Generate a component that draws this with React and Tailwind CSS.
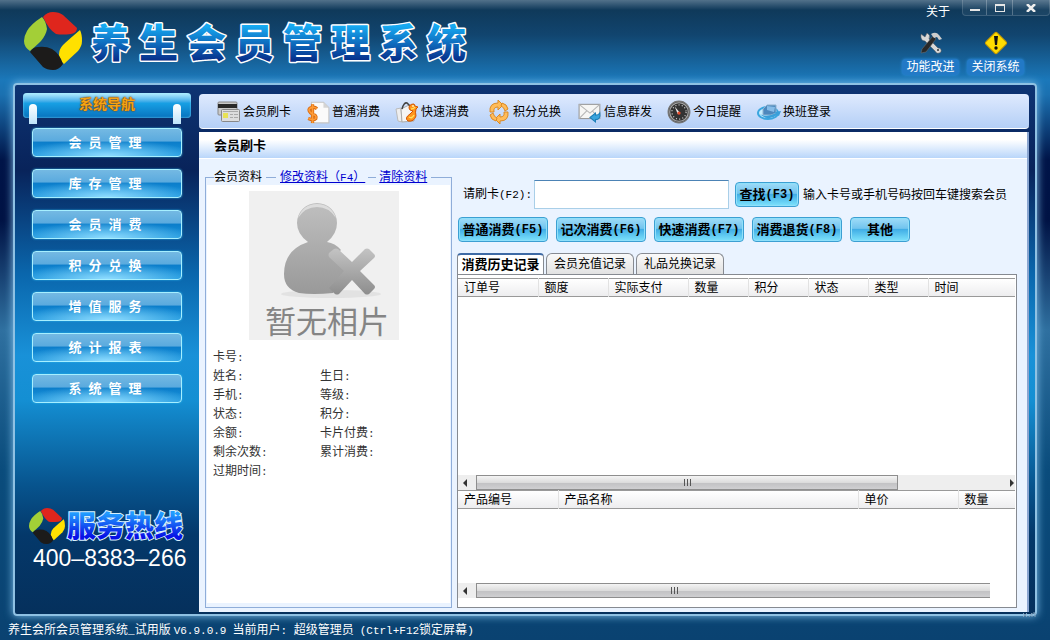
const navItems = ["会员管理", "库存管理", "会员消费", "积分兑换", "增值服务", "统计报表", "系统管理"];
const actions = [
    { name: "普通消费", hotkey: "(F5)" },
    { name: "记次消费", hotkey: "(F6)" },
    { name: "快速消费", hotkey: "(F7)" },
    { name: "消费退货", hotkey: "(F8)" },
];
const orderColumns = [
    { name: "订单号", width: "w-20" },
    { name: "额度", width: "w-[70px]" },
    { name: "实际支付", width: "w-20" },
    { name: "数量", width: "w-[60px]" },
    { name: "积分", width: "w-[60px]" },
    { name: "状态", width: "w-[60px]" },
    { name: "类型", width: "w-[60px]" },
    { name: "时间", width: "" },
];
const productColumns = [
    { name: "产品编号", width: "w-[100px]" },
    { name: "产品名称", width: "w-[300px]" },
    { name: "单价", width: "w-[100px]" },
    { name: "数量", width: "" },
];
const fields = [
    ["卡号", ""],
    ["姓名", "生日"],
    ["手机", "等级"],
    ["状态", "积分"],
    ["余额", "卡片付费"],
    ["剩余次数", "累计消费"],
    ["过期时间", ""],
];

function Mono({ children }) {
    return <span className="font-['Liberation_Mono',monospace] text-[11px]">{children}</span>;
}

function Logo({ className }) {
    return (
        <svg viewBox="0 0 58 58" className={className} aria-hidden="true">
            <path d="M19 5Q23 0 29 0Q35 0 39 3L53 16Q53 21 47 22Q38 23 32 22Q25 18 19 5Z" fill="#df261d" />
            <path d="M18 5Q22 9 23 17Q22 23 17 29Q13 33 6 39Q0 35 0 29Q0 24 3 19Q7 12 18 5Z" fill="#a3cf37" />
            <path d="M56 18Q58 22 58 29Q58 34 54 39L40 52Q36 49 35 43Q35 37 39 33Q43 29 56 18Z" fill="#ffe100" />
            <path d="M6 40Q9 35 14 35Q22 34 28 37Q36 42 39 52Q35 58 29 58Q23 58 19 55Z" fill="#1c1b1a" />
        </svg>
    );
}

function CardIcon() {
    return (
        <svg viewBox="0 0 24 22" className="h-6 w-6">
            <rect x="1" y="1" width="19" height="13" rx="1" fill="#c9c9c9" stroke="#888" />
            <rect x="1" y="3" width="19" height="4" fill="#292929" />
            <rect x="4.500" y="8.500" width="18" height="12" rx="1" fill="#ddd" stroke="#888" />
            <rect x="6" y="12" width="5" height="5" fill="#e8e255" />
            <path d="M6 10.500h15M13 13.500h3M17 13.500h4M13 16.500h3M17 16.500h4" stroke="#aaa" />
        </svg>
    );
}

function BillIcon() {
    return (
        <svg viewBox="0 0 22 22" className="h-6 w-6">
            <path d="M5 2h11l5 5v14H5z" fill="#fafafa" stroke="#c4c4c4" />
            <path d="M16 2v5h5z" fill="#d4d4d4" />
            <path d="M10 8Q8 6 5 7Q2 8 3 10Q4 12 6 13Q10 14 9 17Q7 19 2 17M6 4v17" fill="none" stroke="#d86a10" strokeWidth="3" />
            <path d="M10 8Q8 6 5 7Q2 8 3 10Q4 12 6 13Q10 14 9 17Q7 19 2 17M6 4v17" fill="none" stroke="#ff9c36" strokeWidth="1.500" />
        </svg>
    );
}

function BagIcon() {
    return (
        <svg viewBox="0 0 24 22" className="h-6 w-6">
            <path d="M1 8l5-1 1 14-4-1z" fill="#eee" stroke="#bbb" />
            <path d="M6 8l8-4 5 5v11l-12 1z" fill="#f5f5f5" stroke="#aaa" />
            <path d="M7 8Q9 1 12 2L17 7" fill="none" stroke="#444" strokeWidth="1.500" />
            <path d="M14 7Q14 3 19 3l1 2 3 1-2 2Q20 11 21 15q-2 6-8 5-4-3 2-7l3-3-3-1Z" fill="#ff941d" stroke="#d25500" />
            <circle cx="18" cy="5" r="1" fill="#fff1b2" />
            <path d="M14 16q3 2 5-2M16 8q3 0 4-2" fill="none" stroke="#ffe05c" strokeWidth="1.500" />
        </svg>
    );
}

function ExchangeIcon() {
    return (
        <svg viewBox="0 0 22 24" className="h-6 w-6">
            <path d="M2 12Q1 3 10 3V0l5 5-5 5V7Q5 7 6 12Z" fill="#ffbc59" stroke="#dc8a24" />
            <path d="M20 12Q21 21 12 21v3l-5-5 5-5v3Q17 17 16 12Z" fill="#ffbc59" stroke="#dc8a24" />
            <path d="M14 3Q19 4 20 9L17 11Q16 7 13 6ZM8 21Q3 20 2 15L5 13Q6 17 9 18Z" fill="#ffbc59" stroke="#dc8a24" />
        </svg>
    );
}

function MailIcon() {
    return (
        <svg viewBox="0 0 22 20" className="h-6 w-6">
            <rect x="1" y="3" width="19" height="13" fill="#f6f6f4" stroke="#9a9a9a" />
            <path d="M1 3l10 8 9-8M1 16l7-7M20 16l-7-7" fill="none" stroke="#b5b5b5" />
            <path d="M11 15l5-4v2q3 0 4-2 1 6-4 6v2z" fill="#39a4dd" stroke="#1c7fb8" />
        </svg>
    );
}

function GaugeIcon() {
    return (
        <svg viewBox="0 0 22 22" className="h-6 w-6">
            <circle cx="11" cy="11" r="10" fill="#555" stroke="#777" />
            <circle cx="11" cy="11" r="8.500" fill="#333" stroke="#aaa" />
            <circle cx="11" cy="11" r="6.500" fill="none" stroke="#ddd" strokeDasharray="1 2" />
            <path d="M7 6l5 6-2 1z" fill="#eee" />
            <circle cx="11" cy="12" r="1.500" fill="#ed4d2c" />
        </svg>
    );
}

function ShiftIcon() {
    return (
        <svg viewBox="0 0 24 22" className="h-6 w-6">
            <ellipse cx="11" cy="12" rx="10" ry="6" fill="#c5edff" stroke="#3ba6df" strokeWidth="2" />
            <path d="M6 8l4-4h9v8l-5 2H6z" fill="#4d88bd" stroke="#8fb2d0" />
            <path d="M10 5l8 1-1 5-7-2z" fill="#86bce8" />
            <path d="M3 13Q10 17 19 12l-2-1 7-1-2 5-2-1Q11 21 3 13" fill="#399fd9" />
        </svg>
    );
}

const tools = [
    { name: "会员刷卡", icon: CardIcon, width: "w-[89px]" },
    { name: "普通消费", icon: BillIcon, width: "w-[89px]" },
    { name: "快速消费", icon: BagIcon, width: "w-[92px]" },
    { name: "积分兑换", icon: ExchangeIcon, width: "w-[91px]" },
    { name: "信息群发", icon: MailIcon, width: "w-[89px]" },
    { name: "今日提醒", icon: GaugeIcon, width: "w-[90px]" },
    { name: "换班登录", icon: ShiftIcon, width: "w-[92px]" },
];

function Header() {
    return (
        <header className="flex h-[83px] justify-between pl-6">
            <div className="flex items-start pt-3">
                <Logo className="h-[58px] w-[58px]" />
                <svg viewBox="0 0 386 58" className="h-[58px] w-[386px] overflow-visible" role="img" aria-label="养生会员管理系统">
                    <defs>
                        <linearGradient id="title" x1="0" y1="0" x2="0" y2="1">
                            <stop offset="0.25" stopColor="#16aaf2" />
                            <stop offset="0.85" stopColor="#07328d" />
                        </linearGradient>
                    </defs>
                    <text
                        x="9 57 105 153 201 249 297 345"
                        y="45"
                        fontSize="39"
                        fontWeight="900"
                        fill="url(#title)"
                        stroke="#fff"
                        strokeWidth="3"
                        strokeLinejoin="round"
                        paintOrder="stroke"
                        className="font-['Noto_Sans_CJK_SC',sans-serif]"
                    >
                        养生会员管理系统
                    </text>
                </svg>
            </div>
            <div className="flex flex-col items-end text-white">
                <div className="flex">
                    <button className="mr-3 mt-1 h-4 leading-4">关于</button>
                    <div className="flex h-4 rounded-b-sm border-x border-b border-white/15 bg-white/5">
                        <button aria-label="最小化" className="flex w-6 items-end justify-center border-r border-white/25 pb-1">
                            <span className="h-[2px] w-[10px] bg-[#e6e6e6]"></span>
                        </button>
                        <button aria-label="最大化" className="flex w-[26px] items-center justify-center border-r border-white/25">
                            <span className="h-2 w-[10px] border border-t-2 border-[#e6e6e6]"></span>
                        </button>
                        <button aria-label="关闭" className="flex w-[36px] items-center justify-center">
                            <svg viewBox="0 0 10 8" className="h-2 w-[10px]">
                                <path d="M1 0L9 8M9 0L1 8" stroke="#eee" strokeWidth="2.500" />
                            </svg>
                        </button>
                    </div>
                </div>
                <div className="mr-[26px] mt-[11px] flex gap-2">
                    <button className="flex w-[57px] flex-col items-center">
                        <svg viewBox="0 0 24 24" className="h-6 w-6">
                            <path d="M2 3l4 3 2-4q4 2 2 6l9 9q4 0 3 4-4 3-6-1L6 10Q1 10 2 3Z" fill="#d8d8d8" stroke="#555" strokeWidth="0.500" />
                            <path d="M14 5l3 3-10 13-5 1 1-4Z" fill="#292929" stroke="#777" strokeWidth="0.500" />
                            <path d="M12 3q5-3 8 1l3 4-3 1-2-3-3 1Z" fill="#ccc" />
                            <circle cx="19" cy="19" r="1" fill="#333" />
                        </svg>
                        <span className="mt-1 h-4 w-full rounded bg-[#2279c6] leading-4 shadow-[0_0_3px_#2a8fe0]">功能改进</span>
                    </button>
                    <button className="flex w-[57px] flex-col items-center">
                        <svg viewBox="0 0 24 24" className="h-6 w-6">
                            <rect x="4" y="4" width="16" height="16" rx="2" transform="rotate(45 12 12)" fill="#ffdc00" stroke="#c99b00" />
                            <path d="M10 5h4l-1 9h-2z" fill="#111" />
                            <circle cx="12" cy="17" r="1.700" fill="#111" />
                        </svg>
                        <span className="mt-1 h-4 w-full rounded bg-[#2279c6] leading-4 shadow-[0_0_3px_#2a8fe0]">关闭系统</span>
                    </button>
                </div>
            </div>
        </header>
    );
}

function Sidebar() {
    return (
        <aside className="flex w-[184px] shrink-0 flex-col items-center pt-2">
            <div className="relative h-[25px] w-[168px] rounded bg-linear-to-b from-[#b8f0ff] via-[#18a0e4] via-40% to-[#0872be] text-center shadow-[inset_0_0_2px_#8ee6ff]">
                <h2 className="text-sm font-bold leading-6 text-[#f5a414] [text-shadow:0_0_1px_#7a3900,0_0_2px_#7a3900]">系统导航</h2>
                <span className="absolute left-[6px] top-[11px] h-5 w-2 rounded-t bg-linear-to-b from-white to-[#bde4fa]"></span>
                <span className="absolute right-[10px] top-[11px] h-5 w-2 rounded-t bg-linear-to-b from-white to-[#bde4fa]"></span>
            </div>
            <nav className="mt-[10px] flex flex-col gap-3">
                {navItems.map((item) => (
                    <button
                        key={item}
                        className="flex h-[29px] w-[150px] items-center justify-center gap-[7px] rounded border border-[#a6efff] bg-[radial-gradient(ellipse_60%_60%_at_50%_100%,#8edcff,transparent),linear-gradient(#74b9e3_0%,#5aaade_45%,#0b7dca_48%,#1d98df_100%)] pr-1 text-[13px] font-bold text-white shadow-[0_0_2px_#2cb5ee]"
                    >
                        {item.split("").map((char, i) => (
                            <span key={i}>{char}</span>
                        ))}
                    </button>
                ))}
            </nav>
            <div className="mb-[42px] mt-auto flex w-[156px] flex-col">
                <div className="flex items-center">
                    <Logo className="h-9 w-9" />
                    <svg viewBox="0 0 120 36" className="h-9 w-[120px] overflow-visible" role="img" aria-label="服务热线">
                        <defs>
                            <linearGradient id="hotline" x1="0" y1="0" x2="0" y2="1">
                                <stop offset="0.25" stopColor="#209cff" />
                                <stop offset="0.8" stopColor="#0712e6" />
                            </linearGradient>
                        </defs>
                        <text
                            x="2"
                            y="29"
                            fontSize="29"
                            fontWeight="900"
                            fill="url(#hotline)"
                            stroke="#d8f1ff"
                            strokeWidth="2"
                            paintOrder="stroke"
                            className="font-['Noto_Sans_CJK_SC',sans-serif]"
                        >
                            服务热线
                        </text>
                    </svg>
                </div>
                <p className="whitespace-nowrap pl-1 font-['Liberation_Sans',sans-serif] text-[23px] leading-7 text-white">400–8383–266</p>
            </div>
        </aside>
    );
}

function Toolbar() {
    return (
        <div className="flex h-[35px] items-center rounded border-b border-white bg-linear-to-b from-[#dfeafe] to-[#b4cff6] pl-[18px] pt-[2px]">
            {tools.map((tool) => (
                <button key={tool.name} className={`flex shrink-0 items-center gap-[2px] whitespace-nowrap ${tool.width}`}>
                    <tool.icon />
                    {tool.name}
                </button>
            ))}
        </div>
    );
}

function Field({ name }) {
    return (
        <dt>
            {name}
            <Mono>:</Mono>
        </dt>
    );
}

function MemberPanel() {
    return (
        <fieldset className="flex w-[247px] shrink-0 flex-col border border-[#8fadd9] bg-[#eaf3ff] pb-1">
            <legend className="ml-2 flex h-4 items-center whitespace-nowrap leading-4">
                会员资料
                <span className="mx-1 h-px w-[10px] bg-[#8fadd9]"></span>
                <a href="#edit" className="text-[#0000d0] underline">
                    修改资料（<Mono>F4</Mono>）
                </a>
                <span className="mx-[3px] h-px w-2 bg-[#8fadd9]"></span>
                <a href="#clear" className="mr-1 text-[#0000d0] underline">
                    清除资料
                </a>
            </legend>
            <div className="mx-px flex-1 bg-white pl-[6px] pt-[6px] text-[#333]">
                <svg viewBox="0 0 150 149" className="ml-9 h-[149px] w-[150px] overflow-visible" role="img" aria-label="暂无相片">
                    <defs>
                        <linearGradient id="person" x1="0" y1="0" x2="0" y2="1">
                            <stop offset="0" stopColor="#bfbfbf" />
                            <stop offset="1" stopColor="#999" />
                        </linearGradient>
                        <linearGradient id="cross" gradientUnits="userSpaceOnUse" x1="103" y1="57" x2="103" y2="103">
                            <stop offset="0" stopColor="#c4c4c4" />
                            <stop offset="1" stopColor="#8e8e8e" />
                        </linearGradient>
                    </defs>
                    <rect width="150" height="149" fill="#f0f0f0" />
                    <ellipse cx="82" cy="103" rx="50" ry="4" fill="#e2e2e2" />
                    <path d="M59 51Q48 43 48 32a20 20 0 0 1 40 0q0 11-10 19 8 1 14 8l-6 6 10 15-12 22q-20 2-34 0-15-4-15-19 0-24 24-32Z" fill="url(#person)" />
                    <path d="M49 27Q54 13 68 13t19 14Q80 16 68 16T49 27" fill="#ddd" />
                    <path
                        d="M89 58l14 13 13-13q2-1 4 0l5 5q2 2 0 4L111 80l14 14q2 2 0 4l-5 5q-2 1-4 0L103 89 90 103q-2 1-4 0l-6-6L95 80 80 66q-1-2 0-4l5-4q2-1 4 0Z"
                        fill="url(#cross)"
                    />
                    <text x="16" y="142" fontSize="31" fill="#858585" className="font-['Noto_Sans_CJK_SC',sans-serif]">
                        暂无相片
                    </text>
                </svg>
                <dl className="mt-2">
                    {fields.map(([left, right]) => (
                        <div key={left} className="grid h-[19px] grid-cols-[107px_1fr] items-center">
                            <Field name={left} />
                            {right && <Field name={right} />}
                        </div>
                    ))}
                </dl>
            </div>
        </fieldset>
    );
}

function GlossButton({ name, hotkey, className }) {
    return (
        <button
            className={`flex h-[25px] shrink-0 items-center justify-center whitespace-nowrap rounded border border-[#3c9fd2] bg-[linear-gradient(#9fdcf8_0%,#72c4ee_45%,#41aee6_50%,#7ee3fc_100%)] text-[13px] font-bold text-black shadow-[inset_0_0_0_1px_#8fe0fa] ${className}`}
        >
            {name}
            {hotkey && <span className="font-['Liberation_Mono',monospace] text-xs">{hotkey}</span>}
        </button>
    );
}

function HeaderTable({ columns, label }) {
    return (
        <table aria-label={label} className="w-full table-fixed border-collapse border-y border-[#999] text-left">
            <thead>
                <tr className="h-[18px] bg-linear-to-b from-white to-[#ececee]">
                    {columns.map((column) => (
                        <th key={column.name} className={`border-r border-[#e2e2e2] py-0 pl-[6px] font-normal leading-4 last:border-r-0 ${column.width}`}>
                            {column.name}
                        </th>
                    ))}
                </tr>
            </thead>
        </table>
    );
}

function ScrollBar({ thumb, showRight }) {
    return (
        <div className="flex h-[15px] items-stretch bg-[#eee]">
            <span className="flex w-[18px] items-center justify-center pr-1">
                <span className="border-y-4 border-r-4 border-y-transparent border-r-[#333]"></span>
            </span>
            <div className={`flex items-center justify-center gap-[2px] border border-[#8e8e8e] bg-[linear-gradient(#f4f4f4_0%,#dcdcdc_50%,#c2c2c4_55%,#cfcfd1_100%)] ${thumb}`}>
                <span className="h-[7px] w-px bg-[#555]"></span>
                <span className="h-[7px] w-px bg-[#555]"></span>
                <span className="h-[7px] w-px bg-[#555]"></span>
            </div>
            {showRight && (
                <span className="ml-auto mr-px flex items-center">
                    <span className="border-y-4 border-l-4 border-y-transparent border-l-[#333]"></span>
                </span>
            )}
        </div>
    );
}

function Records() {
    return (
        <section className="flex min-w-0 flex-1 flex-col pl-[5px] pr-[10px]">
            <div className="mt-[11px] flex h-[29px] items-center pl-[6px]">
                <label htmlFor="card" className="w-[71px] shrink-0 whitespace-nowrap">
                    请刷卡<Mono>(F2):</Mono>
                </label>
                <input id="card" className="h-[29px] w-[195px] border border-[#a9cfe8] border-t-[#4c83b5] bg-white px-1 outline-none" />
                <GlossButton name="查找" hotkey="(F3)" className="ml-[6px] w-16" />
                <span className="ml-1 whitespace-nowrap">输入卡号或手机号码按回车键搜索会员</span>
            </div>
            <div className="mt-2 flex gap-2 pl-px">
                {actions.map((action) => (
                    <GlossButton key={action.name} name={action.name} hotkey={action.hotkey} className="w-[90px]" />
                ))}
                <GlossButton name="其他" className="w-[60px]" />
            </div>
            <div role="tablist" className="mt-[11px] flex h-[21px] items-end gap-[2px]">
                <button role="tab" aria-selected="true" className="h-[21px] w-[87px] whitespace-nowrap rounded-t border-x border-t-2 border-[#868a91] border-t-[#3e6aa5] bg-white text-[13px] font-bold leading-4">
                    消费历史记录
                </button>
                <button role="tab" aria-selected="false" className="h-[21px] w-[88px] rounded-t-md border border-b-0 border-[#868a91] bg-linear-to-b from-[#fafafa] to-[#e2e2e2]">
                    会员充值记录
                </button>
                <button role="tab" aria-selected="false" className="h-[21px] w-[88px] rounded-t-md border border-b-0 border-[#868a91] bg-linear-to-b from-[#fafafa] to-[#e2e2e2]">
                    礼品兑换记录
                </button>
            </div>
            <div className="flex flex-1 flex-col border border-[#868a91] bg-white pr-px pt-[3px]">
                <HeaderTable columns={orderColumns} label="消费历史记录" />
                <div className="min-h-[178px] flex-1"></div>
                <ScrollBar thumb="w-[422px]" showRight />
                <HeaderTable columns={productColumns} label="产品" />
                <div className="h-[74px]"></div>
                <div className="mb-[9px] mr-[25px]">
                    <ScrollBar thumb="flex-1 border-r-0 pr-[118px]" />
                </div>
            </div>
        </section>
    );
}

function App() {
    return (
        <div className="flex min-h-screen flex-col bg-[linear-gradient(#52718a_0px,#0f395a_10px,#11456f_35px,#1b78ba_80px,#1b70b0_95px,#001448_160px,#001244_220px,#2f70a0_330px,#0a4c7c_470px,#0a4271_640px)] font-['Liberation_Serif','Noto_Sans_CJK_SC',serif] text-xs text-black">
            <Header />
            <main className="relative mx-[13px] flex flex-1 rounded-sm border-2 border-[#8fc1e3] bg-[linear-gradient(#0e3473_0px,#08235a_85px,#0a67ad_190px,#1991d8_270px,#148fd3_315px,#07548e_400px,#04386a_450px,#05305c_530px)] shadow-[0_0_8px_#7fc0eb]">
                <Sidebar />
                <div className="flex min-w-0 flex-1 flex-col pb-[2px] pr-[6px] pt-[9px]">
                    <Toolbar />
                    <div className="mt-[3px] flex flex-1 flex-col border-r-2 border-[#8aa5d0] bg-[#eaf3ff]">
                        <h1 className="h-[27px] border-b border-white bg-linear-to-b from-white from-30% to-[#b9d6fa] pl-[15px] text-[13px] font-bold leading-[28px]">会员刷卡</h1>
                        <div className="flex flex-1 pb-1 pl-[6px] pt-[10px]">
                            <MemberPanel />
                            <Records />
                        </div>
                    </div>
                </div>
                <svg viewBox="0 0 14 6" className="absolute -bottom-1 -right-px h-[6px] w-[14px]" aria-hidden="true">
                    <path d="M1 1l4 4M5 1L1 5M7 5l3-4v4M11 1h2v4" fill="none" stroke="#7f9db8" />
                </svg>
            </main>
            <footer className="flex h-6 items-center gap-[6px] whitespace-nowrap px-2 pt-1 text-white">
                <span>
                    养生会所会员管理系统<Mono>_</Mono>试用版 <Mono>V6.9.0.9</Mono>
                </span>
                <span>
                    当前用户<Mono>: </Mono>超级管理员
                </span>
                <span>
                    <Mono>(Ctrl+F12</Mono>锁定屏幕<Mono>)</Mono>
                </span>
            </footer>
        </div>
    );
}

export default App;
